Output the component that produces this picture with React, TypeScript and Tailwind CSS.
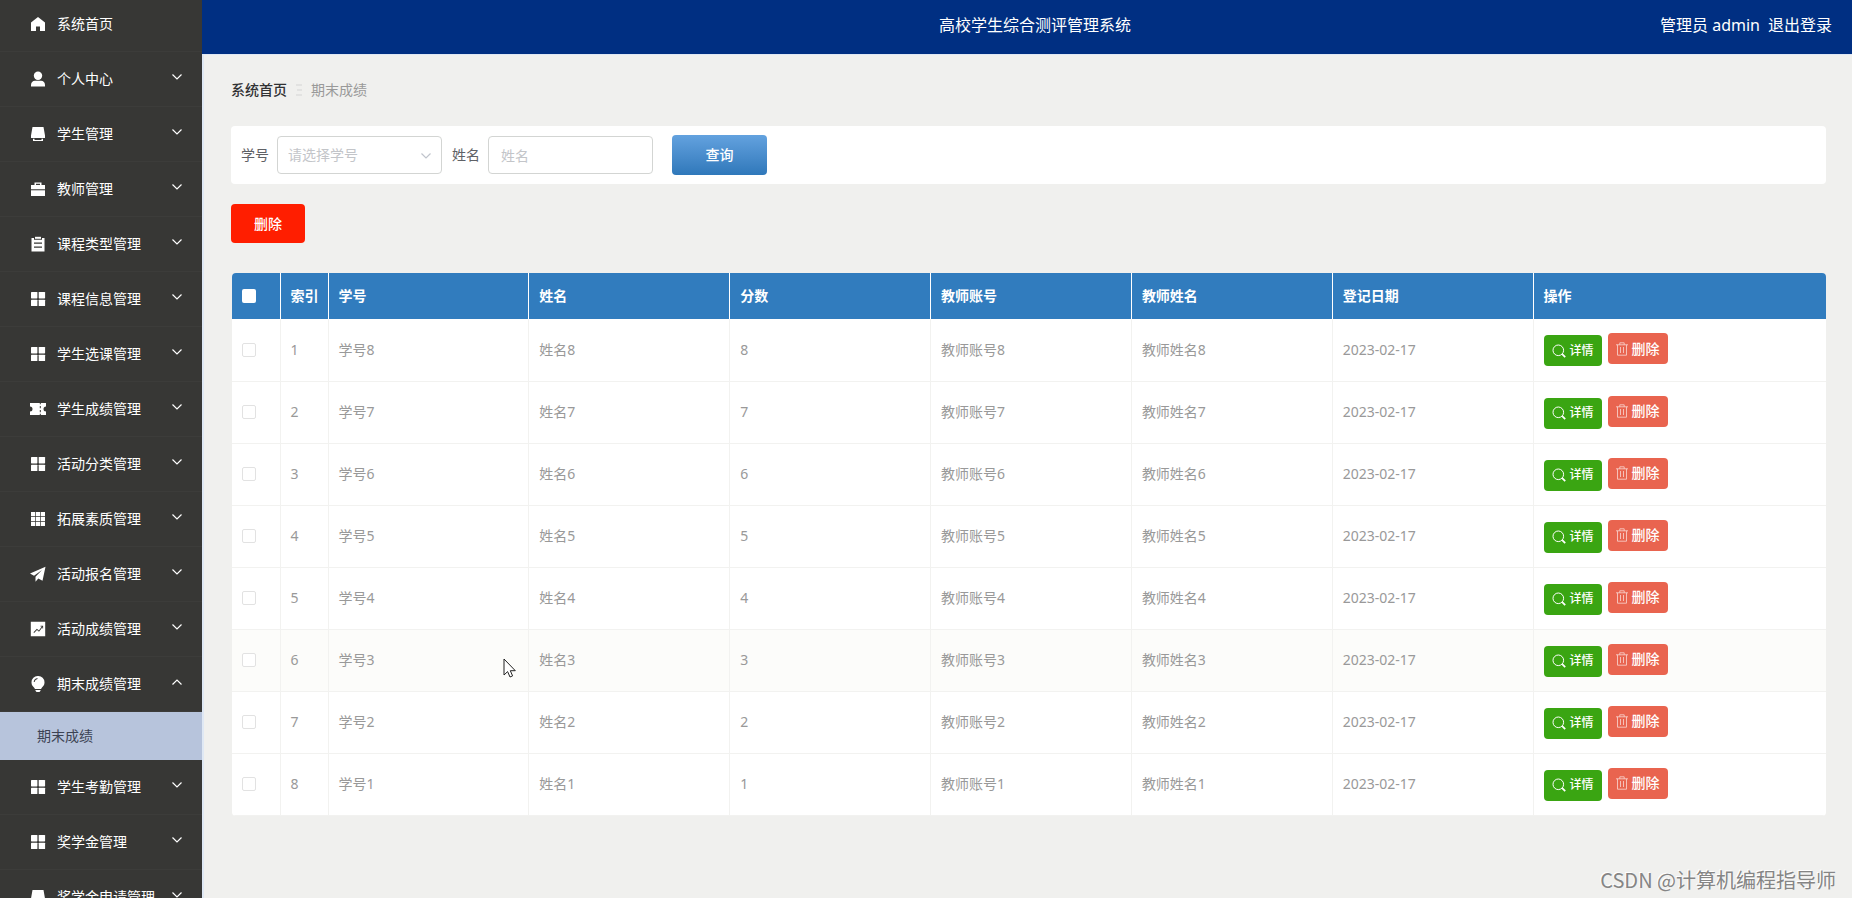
import type { ReactNode } from "react";

type IconName =
  | "home"
  | "user"
  | "shop"
  | "case"
  | "clipboard"
  | "grid"
  | "ticket"
  | "grid9"
  | "plane"
  | "chart"
  | "bulb";

const ICONS: Record<IconName, ReactNode> = {
  home: <path d="M8 1 1 6.6V15h5v-4.5h4V15h5V6.6Z" />,
  user: (
    <>
      <circle cx="8" cy="4.7" r="4.2" />
      <path d="M1 15.5V14c0-2.6 1.6-4.2 4-4.2h6c2.4 0 4 1.6 4 4.2v1.5Z" />
    </>
  ),
  shop: <path d="M2.5 1h11L15 9.5V12H1V9.5ZM3 12.8h1.5V14h7v-1.2H13V15H3Z" />,
  case: (
    <>
      <path fillRule="evenodd" d="M4.5 4V1.5h7V4H15v4.3H1V4ZM6 4h4V2.8H6Z" />
      <path d="M1 9.3h14V15H1Z" />
    </>
  ),
  clipboard: (
    <>
      <path
        fillRule="evenodd"
        d="M1.5 2H4v1.8h8V2h2.5v13.5h-13ZM4 6.5v1.2h8V6.5ZM4 10.5v1.2h8v-1.2Z"
      />
      <path d="M5 .8h6v2H5Z" />
    </>
  ),
  grid: (
    <>
      <rect x="1" y="1" width="6.4" height="6.4" rx=".6" />
      <rect x="8.7" y="1" width="6.4" height="6.4" rx=".6" />
      <rect x="1" y="8.7" width="6.4" height="6.4" rx=".6" />
      <rect x="8.7" y="8.7" width="6.4" height="6.4" rx=".6" />
    </>
  ),
  ticket: (
    <path
      fillRule="evenodd"
      d="M0 2h9.8v1.2h1V2H16v3.5a2.5 2.5 0 0 0 0 5V14h-5.2v-1.2h-1V14H0v-3.5a2.5 2.5 0 0 0 0-5ZM9.8 5v2.3h1V5Zm0 4v2.3h1V9Z"
    />
  ),
  grid9: (
    <path d="M1 1h4.2v4.2H1ZM5.9 1h4.2v4.2H5.9ZM10.8 1H15v4.2h-4.2ZM1 5.9h4.2v4.2H1ZM5.9 5.9h4.2v4.2H5.9ZM10.8 5.9H15v4.2h-4.2ZM1 10.8h4.2V15H1ZM5.9 10.8h4.2V15H5.9ZM10.8 10.8H15V15h-4.2Z" />
  ),
  plane: <path d="M15.5.8 0 7.5l4 2.3L12 4 5.5 10.8V15.8l2.8-3.2 4.2 2.2Z" />,
  chart: (
    <path
      fillRule="evenodd"
      d="M.8.8h14.4v14.4H.8ZM3.5 11.3l.6.6L7 9l2 1.7 3.4-4.5v1.2h.7V4.8h-2.6v.7h1.3L8.9 9.5l-2-1.7Z"
    />
  ),
  bulb: (
    <>
      <path
        fillRule="evenodd"
        d="M8 0a6.3 6.3 0 0 1 6.5 6.4c0 2.5-1.3 3.8-2.5 5L11 13H5l-1-1.6c-1.2-1.2-2.5-2.5-2.5-5A6.3 6.3 0 0 1 8 0ZM7.5 2A4.5 4.5 0 0 0 3.7 6h.9a3.6 3.6 0 0 1 2.9-3.1Z"
      />
      <path d="M5.5 14h5v.8l-1 1.2h-3l-1-1.2Z" />
    </>
  ),
};

const MENU: { label: string; icon: IconName; children?: string[] }[] = [
  { label: "个人中心", icon: "user" },
  { label: "学生管理", icon: "shop" },
  { label: "教师管理", icon: "case" },
  { label: "课程类型管理", icon: "clipboard" },
  { label: "课程信息管理", icon: "grid" },
  { label: "学生选课管理", icon: "grid" },
  { label: "学生成绩管理", icon: "ticket" },
  { label: "活动分类管理", icon: "grid" },
  { label: "拓展素质管理", icon: "grid9" },
  { label: "活动报名管理", icon: "plane" },
  { label: "活动成绩管理", icon: "chart" },
  { label: "期末成绩管理", icon: "bulb", children: ["期末成绩"] },
  { label: "学生考勤管理", icon: "grid" },
  { label: "奖学金管理", icon: "grid" },
  { label: "奖学金申请管理", icon: "shop" },
];

const COLUMNS = ["学号", "姓名", "分数", "教师账号", "教师姓名", "登记日期"];

const ROWS = [8, 7, 6, 5, 4, 3, 2, 1].map((n, i) => ({
  index: i + 1,
  cells: [`学号${n}`, `姓名${n}`, `${n}`, `教师账号${n}`, `教师姓名${n}`, "2023-02-17"],
}));

function MenuIcon({ name }: { name: IconName }) {
  return (
    <svg viewBox="0 0 16 16" className="size-4 shrink-0 fill-white" aria-hidden="true">
      {ICONS[name]}
    </svg>
  );
}

function Chevron({ up = false, className = "" }: { up?: boolean; className?: string }) {
  return (
    <svg viewBox="0 0 12 12" className={`size-3 shrink-0 ${className}`} fill="none" stroke="currentColor" aria-hidden="true">
      <path d={up ? "M1.5 8.5 6 4l4.5 4.5" : "M1.5 3.5 6 8l4.5-4.5"} strokeWidth="1.2" />
    </svg>
  );
}

function Sidebar() {
  return (
    <aside className="w-[202px] shrink-0 overflow-hidden bg-[#373735] text-sm text-white">
      {/* list is scrolled down a few pixels */}
      <nav className="-mt-[3px]">
        <a href="#home" className="flex h-[55px] items-center gap-[11px] border-b border-[#3c3c3a] pl-[30px]">
          <MenuIcon name="home" />
          <span>系统首页</span>
        </a>
        {MENU.map((item) => (
          <div key={item.label}>
            <button
              type="button"
              aria-expanded={!!item.children}
              className="flex h-[55px] w-full items-center gap-[11px] border-b border-[#3c3c3a] pr-[19px] pl-[30px] text-left"
            >
              <MenuIcon name={item.icon} />
              <span className="flex-1">{item.label}</span>
              <Chevron up={!!item.children} className="mb-1" />
            </button>
            {item.children?.map((child) => (
              <a key={child} href="#scores" className="flex h-12 items-center bg-[#b7c4dc] pl-[37px] text-[#3c4353]">
                {child}
              </a>
            ))}
          </div>
        ))}
      </nav>
    </aside>
  );
}

function Header() {
  return (
    <header className="flex h-[54px] shrink-0 items-center bg-[#002f82] pr-5 pb-1 pl-9 text-base text-white">
      <div className="flex-1" />
      <h1>高校学生综合测评管理系统</h1>
      <div className="flex flex-1 justify-end gap-2">
        <span>管理员 admin</span>
        <a href="#logout">退出登录</a>
      </div>
    </header>
  );
}

function SearchBar() {
  return (
    <form className="flex items-center rounded-sm bg-white px-2.5 py-[9px] text-[#5f6166]">
      <label htmlFor="studentNo">学号</label>
      <div className="relative ml-2 w-[165px]">
        <select
          id="studentNo"
          defaultValue=""
          className="block h-[38px] w-full appearance-none rounded border border-[#d3d5d3] bg-white px-2.5 text-[#c3c5c9]"
        >
          <option value="">请选择学号</option>
        </select>
        <Chevron className="pointer-events-none absolute top-3.5 right-2.5 text-[#c0c4cc]" />
      </div>
      <label htmlFor="studentName" className="ml-2.5">
        姓名
      </label>
      <input
        id="studentName"
        placeholder="姓名"
        className="ml-2 h-[38px] w-[165px] rounded border border-[#d3d5d3] bg-white px-3 placeholder:text-[#c3c5c9]"
      />
      <button
        type="button"
        className="ml-[19px] h-10 w-[95px] rounded bg-linear-to-b from-[#63a2df] to-[#2f78ba] font-medium text-white"
      >
        查询
      </button>
    </form>
  );
}

function RowActions() {
  return (
    <div className="flex gap-1.5">
      <button
        type="button"
        className="mt-0.5 flex h-[31px] w-[58px] items-center justify-center gap-1 rounded bg-[#3aa512] text-xs font-medium text-white"
      >
        <svg viewBox="0 0 14 14" className="size-3.5" fill="none" stroke="currentColor" aria-hidden="true">
          <circle cx="6.3" cy="6.3" r="5.3" />
          <path d="m10.2 10.2 3 3" strokeWidth="1.8" />
        </svg>
        详情
      </button>
      <button
        type="button"
        className="flex h-[31px] w-[60px] items-center justify-center gap-1 rounded bg-[#e9644f] text-sm font-medium text-white"
      >
        <svg viewBox="0 0 12 14" className="h-3.5 w-3 opacity-75" fill="none" stroke="currentColor" strokeWidth=".8" aria-hidden="true">
          <path d="M0 2.8h12M3.8 2.8V.8h4.4v2M1.5 2.8v10.4h9V2.8M4.5 5v6M7.5 5v6" />
        </svg>
        删除
      </button>
    </div>
  );
}

function ScoreTable() {
  return (
    <div className="ml-px overflow-hidden rounded-sm">
      <table className="w-full table-fixed border-collapse bg-white text-left">
        <colgroup>
          <col className="w-12" />
          <col className="w-12" />
          {COLUMNS.map((c) => (
            <col key={c} className="w-[12.6%]" />
          ))}
          <col />
        </colgroup>
        <thead className="bg-[#317cbe] text-white">
          <tr className="h-[46px]">
            <th className="border-r border-white px-2.5">
              <input type="checkbox" aria-label="全选" className="block size-3.5 appearance-none rounded-xs bg-white" />
            </th>
            <th className="border-r border-white px-2.5 whitespace-nowrap">索引</th>
            {COLUMNS.map((c) => (
              <th key={c} className="border-r border-white px-2.5">
                {c}
              </th>
            ))}
            <th className="px-2.5">操作</th>
          </tr>
        </thead>
        <tbody className="text-[#999]">
          {ROWS.map((row) => (
            <tr
              key={row.index}
              className={`h-[62px] border-b border-[#f2f2f0] ${row.index === 6 ? "bg-[#fcfcfa]" : ""}`}
            >
              <td className="border-r border-[#f2f2f0] px-2.5">
                <input
                  type="checkbox"
                  aria-label={`选择第${row.index}行`}
                  className="block size-3.5 appearance-none rounded-xs border border-[#e2e2e2] bg-white"
                />
              </td>
              <td className="border-r border-[#f2f2f0] px-2.5">{row.index}</td>
              {row.cells.map((cell, i) => (
                <td key={i} className="border-r border-[#f2f2f0] px-2.5">
                  {cell}
                </td>
              ))}
              <td className="px-2.5">
                <RowActions />
              </td>
            </tr>
          ))}
        </tbody>
      </table>
    </div>
  );
}

export default function App() {
  return (
    <div className="relative flex h-screen overflow-hidden bg-[#f0f0ee] font-['Noto_Sans','Noto_Sans_CJK_SC',sans-serif]">
      <Sidebar />
      <div className="flex min-w-0 flex-1 flex-col">
        <Header />
        <main className="flex-1 border-t border-l-2 border-[#dfe8f4] pt-[23px] pr-[26px] pl-[27px] text-sm">
          <div className="flex h-6 items-center gap-2">
            <a href="#home" className="font-medium text-[#303133]">
              系统首页
            </a>
            <svg viewBox="0 0 8 12" className="h-3 w-2" stroke="#d4d4d4" aria-hidden="true">
              <path d="M1 1h6M2 6h5M1 11h6" />
            </svg>
            <span className="text-[#999]">期末成绩</span>
          </div>
          <div className="mt-6">
            <SearchBar />
          </div>
          <button type="button" className="mt-5 h-[39px] w-[74px] rounded bg-[#ff1e00] font-medium text-white">
            删除
          </button>
          <div className="mt-[30px]">
            <ScoreTable />
          </div>
        </main>
      </div>

      {/* mouse pointer */}
      <svg viewBox="0 0 13 20" className="absolute top-[658px] left-[503px] h-5 w-[13px]" fill="#fff" stroke="#222" aria-hidden="true">
        <path d="M1 1v16l3.6-3.4L7 19l2.6-1.1-2.3-5.2h5Z" />
      </svg>

      <p className="absolute right-4 bottom-1 font-['Noto_Sans_CJK_SC',sans-serif] text-xl text-[#858585] [text-shadow:-1px_-1px_0_#fff]">
        CSDN @计算机编程指导师
      </p>
    </div>
  );
}
